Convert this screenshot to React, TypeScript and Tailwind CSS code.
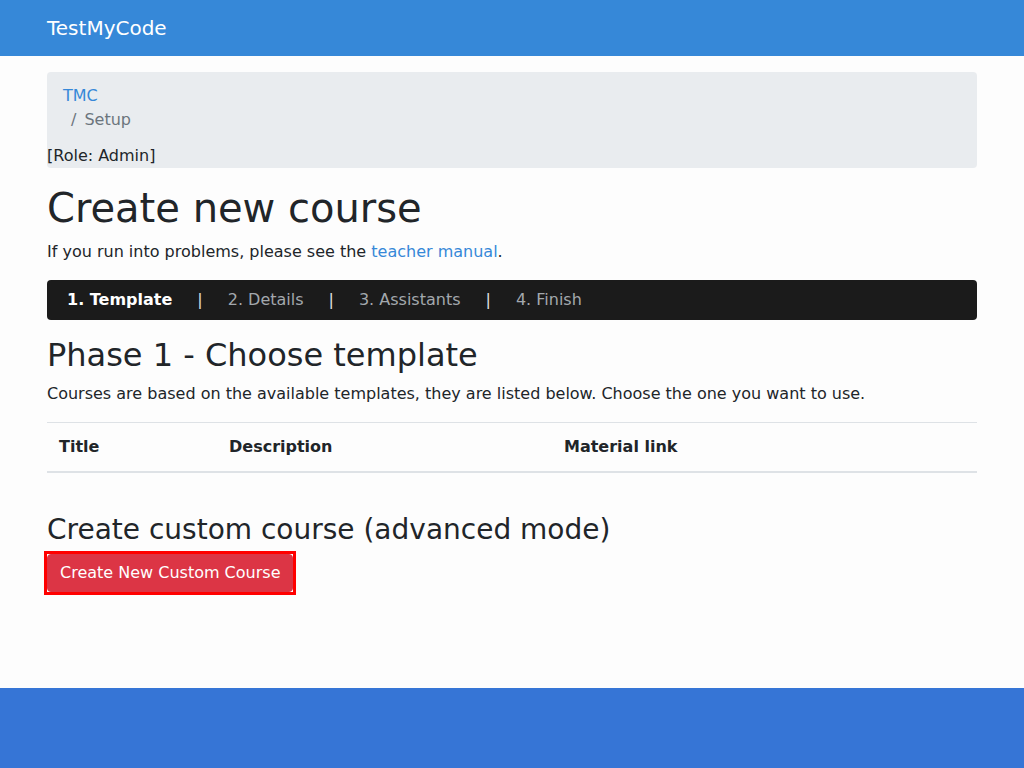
import React from "react";

const STEPS = ["1. Template", "2. Details", "3. Assistants", "4. Finish"];

export default function App() {
  return (
    <div className="flex min-h-screen flex-col bg-[#fdfdfd] font-['DejaVu_Sans',sans-serif] text-[16px] leading-[24px] text-[#212529]">
      <header className="flex h-[56px] items-center bg-[#3688d8] px-[47px]">
        <span className="text-[20px] leading-[30px] text-white">TestMyCode</span>
      </header>

      <main className="mx-[47px] flex-1 pt-[16px]">
        <div className="mb-[16px] rounded-[4px] bg-[#e9ecef]">
          <ol className="px-[16px] py-[12px]">
            <li className="text-[#3688d8]">TMC</li>
            <li className="pl-[8px] text-[#6c757d]">
              <span className="pr-[8px]">/</span>Setup
            </li>
          </ol>
          <div>[Role: Admin]</div>
        </div>

        <h1 className="mb-[8px] text-[40px] leading-[48px]">Create new course</h1>
        <p className="mb-[16px]">
          If you run into problems, please see the <span className="text-[#3688d8]">teacher manual</span>.
        </p>

        <nav className="mb-[16px] flex h-[40px] items-center gap-[25px] rounded-[4px] bg-[#1b1b1b] px-[20px]">
          {STEPS.map((s, i) => (
            <React.Fragment key={s}>
              {i > 0 && <span className="text-[#e0e0e0]">|</span>}
              <span className={i === 0 ? "font-bold text-white" : "text-[#a3a8ad]"}>{s}</span>
            </React.Fragment>
          ))}
        </nav>

        <h2 className="mb-[8px] text-[32px] leading-[38px]">Phase 1 - Choose template</h2>
        <p className="mb-[16px]">
          Courses are based on the available templates, they are listed below. Choose the one you want to use.
        </p>

        <table className="mb-[40px] w-full border-collapse">
          <thead>
            <tr className="border-t border-b-2 border-t-[#dee2e6] border-b-[#dee2e6]">
              <th className="w-[170px] p-[12px] text-left font-bold">Title</th>
              <th className="w-[335px] p-[12px] text-left font-bold">Description</th>
              <th className="p-[12px] text-left font-bold">Material link</th>
            </tr>
          </thead>
        </table>

        <h3 className="mb-[4px] text-[28px] leading-[34px]">Create custom course (advanced mode)</h3>
        <div className="ml-[-3px] flex w-fit border-[3px] border-[#ff0000]">
          <button className="rounded-[4px] border border-[#dc3545] bg-[#dc3545] px-[12px] py-[6px] text-[16px] leading-[24px] text-white">
            Create New Custom Course
          </button>
        </div>
      </main>

      <footer className="h-[80px] bg-[#3675d6]" />
    </div>
  );
}
